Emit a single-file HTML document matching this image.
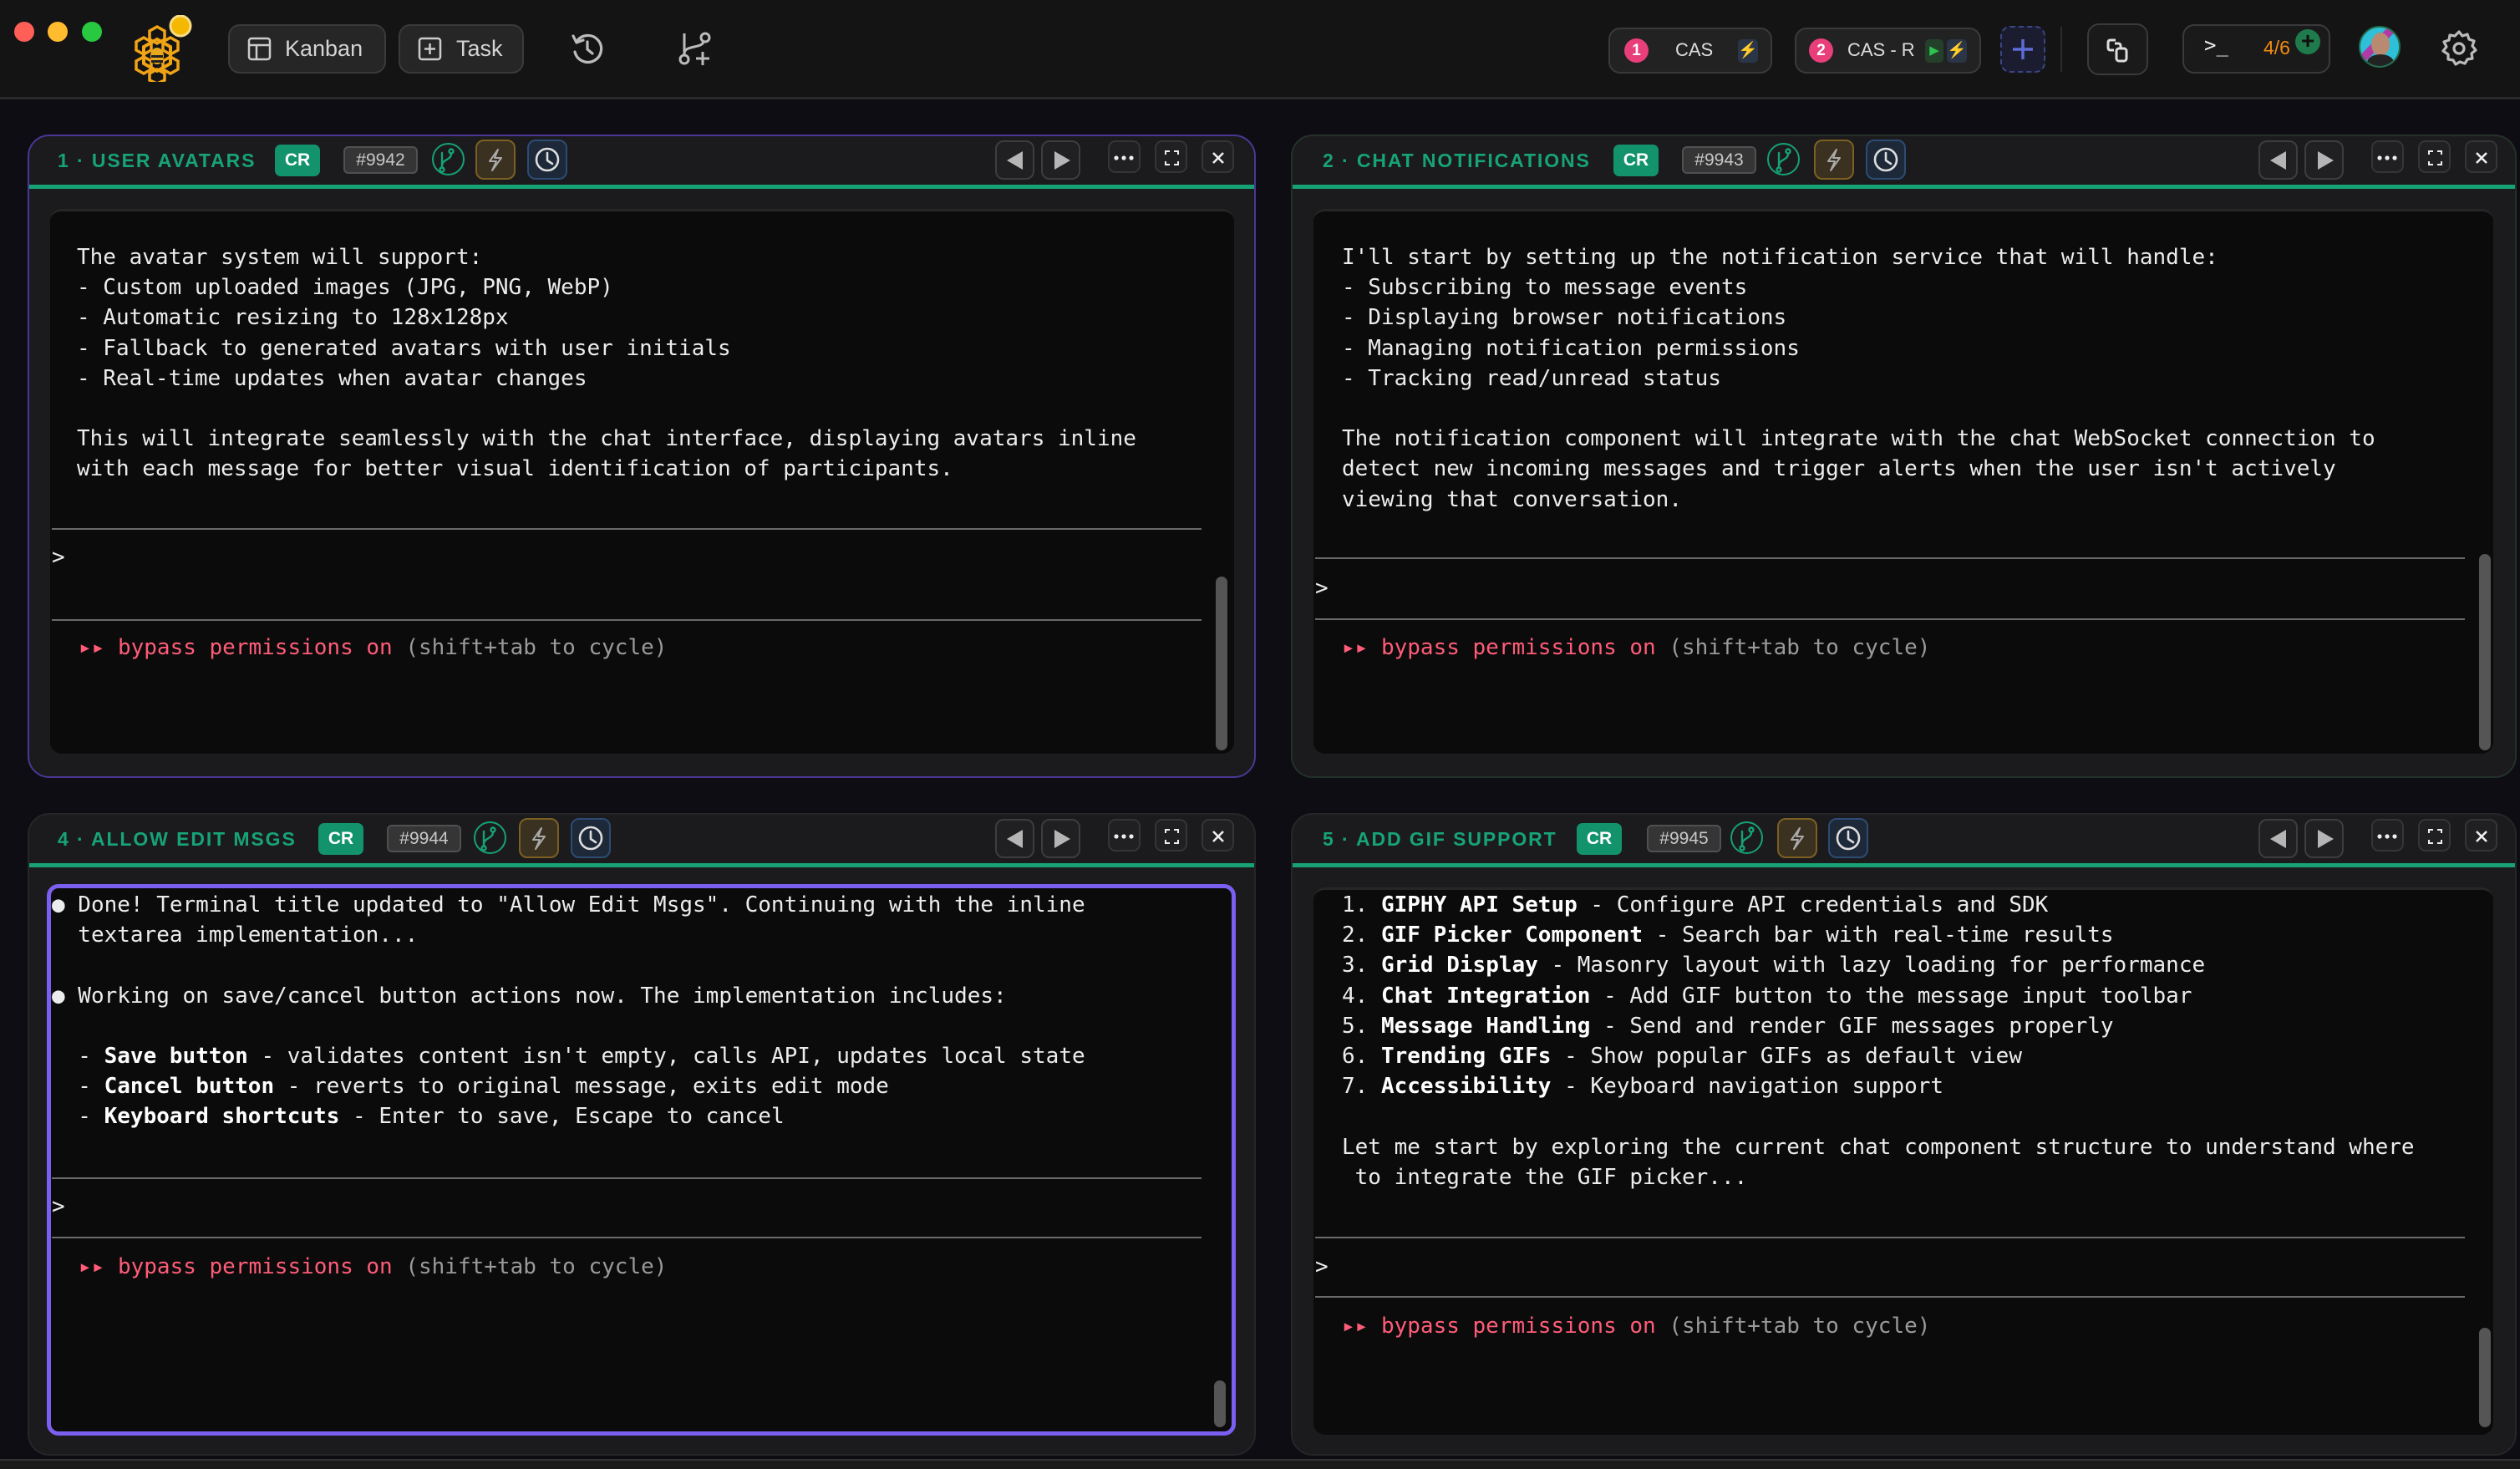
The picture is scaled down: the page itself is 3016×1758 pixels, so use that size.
<!DOCTYPE html>
<html><head><meta charset="utf-8">
<style>
*{box-sizing:border-box;margin:0;padding:0}
body{width:3016px;height:1758px;background:#0e0d13;position:relative;overflow:hidden;font-family:"Liberation Sans",sans-serif}
.abs{position:absolute}
.tb{position:absolute;left:0;top:0;width:3016px;height:119px;background:#141415;border-bottom:3px solid #2a2a2c}
.btn{position:absolute;background:#262627;border:2px solid #3a3a3c;border-radius:14px;color:#d0d0d0}
.panel{position:absolute;background:#1b1b1d;border:2px solid #2b2d2c;border-radius:26px}
.gline{position:absolute;left:0;right:0;height:5px;background:#17a276}
.title{position:absolute;font-weight:bold;font-size:23px;letter-spacing:1.9px;color:#17a377;white-space:nowrap;line-height:24px}
.cr{position:absolute;background:#13936b;color:#fff;font-weight:bold;font-size:21px;text-align:center;border-radius:7px;line-height:38px;width:54px;height:38px}
.tag{position:absolute;background:#353536;border:2px solid #505052;color:#c8c8c8;font-size:21px;text-align:center;border-radius:6px;line-height:29px;width:89px;height:33px}
.ib{position:absolute;width:48px;height:48px;border-radius:10px}
.nb{position:absolute;width:47px;height:47px;border:2px solid #3d3d3f;border-radius:10px;background:#202022}
.sb{position:absolute;width:39px;height:39px;border:2px solid #353537;border-radius:9px;background:#202022}
.term{position:absolute;background:#0b0b0b;border-radius:14px;border-top:3px solid #262626}
.tx{position:absolute;font-family:"DejaVu Sans Mono","Liberation Mono",monospace;font-size:26px;line-height:36.2px;color:#ececec;white-space:pre}
.sep{position:absolute;height:2px;background:#6a6a6a}
.scr{position:absolute;width:14px;background:#555;border-radius:7px}
.pink{color:#ff5c78}.gray{color:#9a9a9a}
b{font-weight:bold;color:#fff}
</style></head><body>

<div class="tb"></div>
<div class="abs" style="left:17px;top:26px;width:24px;height:24px;border-radius:50%;background:#ff5f57"></div>
<div class="abs" style="left:57px;top:26px;width:24px;height:24px;border-radius:50%;background:#febc2e"></div>
<div class="abs" style="left:98px;top:26px;width:24px;height:24px;border-radius:50%;background:#28c840"></div>
<svg class="abs" style="left:150px;top:18px" width="90" height="80" viewBox="150 18 90 80">
 <g fill="none" stroke="#f0a416" stroke-width="3.5">
  <polygon points="188,32 197,37 197,47 188,52 179,47 179,37"/>
  <polygon points="172,45 181,50 181,60 172,65 163,60 163,50"/>
  <polygon points="204,45 213,50 213,60 204,65 195,60 195,50"/>
  <polygon points="172,68 181,73 181,83 172,88 163,83 163,73"/>
  <polygon points="204,68 213,73 213,83 204,88 195,83 195,73"/>
  <polygon points="188,83 197,88 197,96 188,100 179,96 179,88"/>
  <polygon points="188,47 204,56 204,76 188,85 172,76 172,56" stroke-width="4"/>
 </g>
 <ellipse cx="188" cy="67" rx="8" ry="10" fill="#e8a820"/>
 <rect x="181" y="66" width="14" height="3" fill="#222"/><rect x="181" y="72" width="14" height="3" fill="#222"/>
 <circle cx="216" cy="31" r="12" fill="#f5b800" stroke="#f7dc85" stroke-width="3"/>
</svg>
<div class="btn" style="left:273px;top:29px;width:189px;height:59px"></div>
<svg class="abs" style="left:296px;top:44px" width="30" height="30" viewBox="0 0 30 30"><rect x="2" y="2" width="25" height="25" rx="3" fill="none" stroke="#ccc" stroke-width="2.5"/><line x1="2" y1="10" x2="27" y2="10" stroke="#ccc" stroke-width="2.5"/><line x1="11" y1="10" x2="11" y2="27" stroke="#ccc" stroke-width="2.5"/></svg>
<div class="abs" style="left:341px;top:43px;font-size:27px;color:#d4d4d4">Kanban</div>
<div class="btn" style="left:477px;top:29px;width:150px;height:59px"></div>
<svg class="abs" style="left:500px;top:44px" width="30" height="30" viewBox="0 0 30 30"><rect x="2" y="2" width="25" height="25" rx="3" fill="none" stroke="#ccc" stroke-width="2.5"/><line x1="14.5" y1="8" x2="14.5" y2="21" stroke="#ccc" stroke-width="2.5"/><line x1="8" y1="14.5" x2="21" y2="14.5" stroke="#ccc" stroke-width="2.5"/></svg>
<div class="abs" style="left:546px;top:43px;font-size:27px;color:#d4d4d4">Task</div>
<svg class="abs" style="left:682px;top:38px" width="42" height="42" viewBox="0 0 42 42"><path d="M8 12 A16 16 0 1 1 6 24" fill="none" stroke="#bbb" stroke-width="3.2" stroke-linecap="round"/><path d="M4 5 L8 13 L16 10" fill="none" stroke="#bbb" stroke-width="3.2" stroke-linecap="round" stroke-linejoin="round"/><path d="M21 12 V21 L27 26" fill="none" stroke="#bbb" stroke-width="3.2" stroke-linecap="round"/></svg>
<svg class="abs" style="left:810px;top:36px" width="46" height="44" viewBox="0 0 46 44"><circle cx="9" cy="35" r="5" fill="none" stroke="#bbb" stroke-width="3"/><circle cx="34" cy="9" r="5" fill="none" stroke="#bbb" stroke-width="3"/><path d="M9 30 V4 M9 28 C9 18 30 22 32 14" fill="none" stroke="#bbb" stroke-width="3"/><path d="M31 26 V42 M23 34 H39" stroke="#bbb" stroke-width="3"/></svg>

<div class="btn" style="left:1925px;top:33px;width:196px;height:55px;background:#222223"></div>
<div class="abs" style="left:1944px;top:46px;width:29px;height:29px;border-radius:50%;background:#e83e7a;color:#fff;font-size:19px;font-weight:bold;text-align:center;line-height:29px">1</div>
<div class="abs" style="left:2005px;top:47px;font-size:22px;color:#ddd">CAS</div>
<div class="abs" style="left:2080px;top:47px;width:24px;height:28px;border-radius:5px;background:#2b3548;color:#ffc21a;font-size:19px;text-align:center;line-height:28px">⚡</div>
<div class="btn" style="left:2148px;top:33px;width:223px;height:55px;background:#222223"></div>
<div class="abs" style="left:2165px;top:46px;width:29px;height:29px;border-radius:50%;background:#e83e7a;color:#fff;font-size:19px;font-weight:bold;text-align:center;line-height:29px">2</div>
<div class="abs" style="left:2211px;top:47px;font-size:22px;color:#ddd">CAS - R</div>
<div class="abs" style="left:2304px;top:47px;width:22px;height:28px;border-radius:5px;background:#24402b;color:#2ec24f;font-size:15px;text-align:center;line-height:28px">▶</div>
<div class="abs" style="left:2330px;top:47px;width:24px;height:28px;border-radius:5px;background:#2b3548;color:#ffc21a;font-size:19px;text-align:center;line-height:28px">⚡</div>
<div class="abs" style="left:2394px;top:31px;width:54px;height:56px;border:2px dashed #3c4684;border-radius:12px;background:#1b1c30"></div>
<svg class="abs" style="left:2406px;top:44px" width="30" height="30"><path d="M15 3V27M3 15H27" stroke="#5d6cd6" stroke-width="3.5"/></svg>
<div class="abs" style="left:2466px;top:32px;width:2px;height:54px;background:#2c2c2e"></div>
<div class="btn" style="left:2498px;top:28px;width:73px;height:62px;background:#1a1a1b"></div>
<svg class="abs" style="left:2518px;top:42px" width="34" height="34" viewBox="0 0 34 34"><path d="M14 6 H8 Q5 6 5 9 V15 Q5 18 8 18 H12" fill="none" stroke="#ddd" stroke-width="3"/><rect x="15" y="16" width="12" height="15" rx="3" fill="none" stroke="#ddd" stroke-width="3"/><path d="M13 10 H17 Q20 10 20 13 V16" fill="none" stroke="#ddd" stroke-width="3"/></svg>
<div class="btn" style="left:2612px;top:29px;width:177px;height:59px;background:#1a1a1b"></div>
<div class="abs" style="left:2638px;top:40px;font-family:'DejaVu Sans Mono',monospace;font-size:24px;color:#eee">&gt;_</div>
<div class="abs" style="left:2709px;top:44px;font-size:23px;color:#f28a12">4/6</div>
<div class="abs" style="left:2747px;top:35px;width:30px;height:30px;border-radius:50%;background:#1f7a4c;color:#111;font-size:28px;text-align:center;line-height:28px;font-weight:bold">+</div>
<div class="abs" style="left:2823px;top:31px;width:50px;height:50px;border-radius:50%;border:2px solid #236e4c;background:linear-gradient(135deg,#2ec0d8 0 35%,#b03aa6 36% 50%,#2ec0d8 51%);overflow:hidden"><div style="position:absolute;left:13px;top:6px;width:22px;height:28px;border-radius:50%;background:#b88a72"></div><div style="position:absolute;left:8px;top:32px;width:32px;height:20px;border-radius:50% 50% 0 0;background:#222"></div></div>
<svg class="abs" style="left:2920px;top:34px" width="46" height="46" viewBox="0 0 46 46"><path d="M23 4 L27 9 L33 7 L35 13 L41 15 L39 21 L43 26 L38 30 L39 36 L33 37 L30 42 L24 40 L19 43 L16 38 L10 37 L10 31 L4 27 L8 22 L5 16 L11 14 L12 8 L18 9 Z" fill="none" stroke="#bbb" stroke-width="3.2" stroke-linejoin="round"/><circle cx="23" cy="24" r="6" fill="none" stroke="#bbb" stroke-width="3.2"/></svg>

<div class="panel" style="left:33px;top:161px;width:1470px;height:770px;border-color:#4b3793">
 <div class="gline" style="top:58px"></div>
 <div class="title" style="left:34px;top:17px">1 · USER AVATARS</div>
 <div class="cr" style="left:294px;top:10px">CR</div>
 <div class="tag" style="left:376px;top:12px">#9942</div>
 <div class="ib" style="left:482px;top:8px;width:39px;height:39px;border:2px solid #16a174;border-radius:50%"></div>
 <div class="ib" style="left:534px;top:4px;border:2px solid #7c5f22;background:#3a3120"></div>
 <div class="ib" style="left:596px;top:4px;border:2px solid #2c4c74;background:#1d2838"></div>
 <div class="nb" style="left:1156px;top:5px"></div><div class="nb" style="left:1211px;top:5px"></div>
 <div class="sb" style="left:1291px;top:5px"></div><div class="sb" style="left:1347px;top:5px"></div><div class="sb" style="left:1403px;top:5px"></div>
</div>
<div class="panel" style="left:1545px;top:161px;width:1467px;height:770px;border-color:#243129">
 <div class="gline" style="top:58px"></div>
 <div class="title" style="left:36px;top:17px">2 · CHAT NOTIFICATIONS</div>
 <div class="cr" style="left:384px;top:10px">CR</div>
 <div class="tag" style="left:466px;top:12px">#9943</div>
 <div class="ib" style="left:568px;top:8px;width:39px;height:39px;border:2px solid #16a174;border-radius:50%"></div>
 <div class="ib" style="left:624px;top:4px;border:2px solid #7c5f22;background:#3a3120"></div>
 <div class="ib" style="left:686px;top:4px;border:2px solid #2c4c74;background:#1d2838"></div>
 <div class="nb" style="left:1156px;top:5px"></div><div class="nb" style="left:1211px;top:5px"></div>
 <div class="sb" style="left:1291px;top:5px"></div><div class="sb" style="left:1347px;top:5px"></div><div class="sb" style="left:1403px;top:5px"></div>
</div>
<div class="panel" style="left:33px;top:973px;width:1470px;height:769px;border-color:#262628">
 <div class="gline" style="top:58px"></div>
 <div class="title" style="left:34px;top:17px">4 · ALLOW EDIT MSGS</div>
 <div class="cr" style="left:346px;top:10px">CR</div>
 <div class="tag" style="left:428px;top:12px">#9944</div>
 <div class="ib" style="left:532px;top:8px;width:39px;height:39px;border:2px solid #16a174;border-radius:50%"></div>
 <div class="ib" style="left:586px;top:4px;border:2px solid #7c5f22;background:#3a3120"></div>
 <div class="ib" style="left:648px;top:4px;border:2px solid #2c4c74;background:#1d2838"></div>
 <div class="nb" style="left:1156px;top:5px"></div><div class="nb" style="left:1211px;top:5px"></div>
 <div class="sb" style="left:1291px;top:5px"></div><div class="sb" style="left:1347px;top:5px"></div><div class="sb" style="left:1403px;top:5px"></div>
</div>
<div class="panel" style="left:1545px;top:973px;width:1467px;height:769px;border-color:#262628">
 <div class="gline" style="top:58px"></div>
 <div class="title" style="left:36px;top:17px">5 · ADD GIF SUPPORT</div>
 <div class="cr" style="left:340px;top:10px">CR</div>
 <div class="tag" style="left:424px;top:12px">#9945</div>
 <div class="ib" style="left:524px;top:8px;width:39px;height:39px;border:2px solid #16a174;border-radius:50%"></div>
 <div class="ib" style="left:580px;top:4px;border:2px solid #7c5f22;background:#3a3120"></div>
 <div class="ib" style="left:641px;top:4px;border:2px solid #2c4c74;background:#1d2838"></div>
 <div class="nb" style="left:1156px;top:5px"></div><div class="nb" style="left:1211px;top:5px"></div>
 <div class="sb" style="left:1291px;top:5px"></div><div class="sb" style="left:1347px;top:5px"></div><div class="sb" style="left:1403px;top:5px"></div>
</div>

<svg class="abs" style="left:0;top:0" width="3016" height="1758" pointer-events="none">
 <g fill="none" stroke-linecap="round" stroke-linejoin="round">
 <g stroke="#16a174" stroke-width="2.4">
  <path d="M529 183 V201 M529 199 C529 190 540 192 540 184"/><circle cx="540" cy="181" r="2.5"/><circle cx="529" cy="203" r="2.5"/>
  <path d="M2129 183 V201 M2129 199 C2129 190 2140 192 2140 184"/><circle cx="2140" cy="181" r="2.5"/><circle cx="2129" cy="203" r="2.5"/>
  <path d="M579 995 V1013 M579 1011 C579 1002 590 1004 590 996"/><circle cx="590" cy="993" r="2.5"/><circle cx="579" cy="1015" r="2.5"/>
  <path d="M2085 995 V1013 M2085 1011 C2085 1002 2096 1004 2096 996"/><circle cx="2096" cy="993" r="2.5"/><circle cx="2085" cy="1015" r="2.5"/>
 </g>
 <g stroke="#aaa" stroke-width="2">
  <path d="M596 179 L586 193 H594 L589 204 L600 189 H592 Z"/>
  <path d="M2198 179 L2188 193 H2196 L2191 204 L2202 189 H2194 Z"/>
  <path d="M648 991 L638 1005 H646 L641 1016 L652 1001 H644 Z"/>
  <path d="M2154 991 L2144 1005 H2152 L2147 1016 L2158 1001 H2150 Z"/>
 </g>
 <g stroke="#ddd" stroke-width="2.6">
  <circle cx="655" cy="191" r="13"/><path d="M655 183 V192 L661 196"/>
  <circle cx="2257" cy="191" r="13"/><path d="M2257 183 V192 L2263 196"/>
  <circle cx="707" cy="1003" r="13"/><path d="M707 995 V1004 L713 1008"/>
  <circle cx="2212" cy="1003" r="13"/><path d="M2212 995 V1004 L2218 1008"/>
 </g>
 </g>
 <g fill="#b5b5b5">
  <path d="M1205 192 L1224 181 V203 Z"/><path d="M1281 192 L1262 181 V203 Z"/>
  <path d="M2717 192 L2736 181 V203 Z"/><path d="M2793 192 L2774 181 V203 Z"/>
  <path d="M1205 1004 L1224 993 V1015 Z"/><path d="M1281 1004 L1262 993 V1015 Z"/>
  <path d="M2717 1004 L2736 993 V1015 Z"/><path d="M2793 1004 L2774 993 V1015 Z"/>
 </g>
 <g fill="#eee">
  <circle cx="1336" cy="189" r="2.6"/><circle cx="1345" cy="189" r="2.6"/><circle cx="1354" cy="189" r="2.6"/>
  <circle cx="2848" cy="189" r="2.6"/><circle cx="2857" cy="189" r="2.6"/><circle cx="2866" cy="189" r="2.6"/>
  <circle cx="1336" cy="1001" r="2.6"/><circle cx="1345" cy="1001" r="2.6"/><circle cx="1354" cy="1001" r="2.6"/>
  <circle cx="2848" cy="1001" r="2.6"/><circle cx="2857" cy="1001" r="2.6"/><circle cx="2866" cy="1001" r="2.6"/>
 </g>
 <g fill="none" stroke="#eee" stroke-width="2">
  <path d="M1395 185 V181 H1400 M1405 181 H1410 V185 M1410 193 V197 H1405 M1400 197 H1395 V193"/>
  <path d="M2907 185 V181 H2912 M2917 181 H2922 V185 M2922 193 V197 H2917 M2912 197 H2907 V193"/>
  <path d="M1395 997 V993 H1400 M1405 993 H1410 V997 M1410 1005 V1009 H1405 M1400 1009 H1395 V1005"/>
  <path d="M2907 997 V993 H2912 M2917 993 H2922 V997 M2922 1005 V1009 H2917 M2912 1009 H2907 V1005"/>
  <g stroke-width="2.6"><path d="M1452 183 L1464 195 M1464 183 L1452 195"/><path d="M2964 183 L2976 195 M2976 183 L2964 195"/><path d="M1452 995 L1464 1007 M1464 995 L1452 1007"/><path d="M2964 995 L2976 1007 M2976 995 L2964 1007"/></g>
 </g>
</svg>

<div class="term" style="left:60px;top:250px;width:1417px;height:652px"></div>
<div class="tx" style="left:92px;top:290px">The avatar system will support:
- Custom uploaded images (JPG, PNG, WebP)
- Automatic resizing to 128x128px
- Fallback to generated avatars with user initials
- Real-time updates when avatar changes

This will integrate seamlessly with the chat interface, displaying avatars inline
with each message for better visual identification of participants.</div>
<div class="sep" style="left:62px;width:1376px;top:632px"></div>
<div class="tx" style="left:62px;top:649px">&gt;</div>
<div class="sep" style="left:62px;width:1376px;top:741px"></div>
<div class="tx" style="left:94px;top:757px"><span class="pink">▸▸ bypass permissions on</span> <span class="gray">(shift+tab to cycle)</span></div>
<div class="scr" style="left:1455px;top:690px;height:208px"></div>

<div class="term" style="left:1572px;top:250px;width:1412px;height:652px"></div>
<div class="tx" style="left:1606px;top:290px">I'll start by setting up the notification service that will handle:
- Subscribing to message events
- Displaying browser notifications
- Managing notification permissions
- Tracking read/unread status

The notification component will integrate with the chat WebSocket connection to
detect new incoming messages and trigger alerts when the user isn't actively
viewing that conversation.</div>
<div class="sep" style="left:1574px;width:1376px;top:667px"></div>
<div class="tx" style="left:1574px;top:686px">&gt;</div>
<div class="sep" style="left:1574px;width:1376px;top:740px"></div>
<div class="tx" style="left:1606px;top:757px"><span class="pink">▸▸ bypass permissions on</span> <span class="gray">(shift+tab to cycle)</span></div>
<div class="scr" style="left:2967px;top:663px;height:235px"></div>

<div class="term" style="left:56px;top:1058px;width:1423px;height:660px;border:5px solid #7b5ff0;background:#0b0b0b"></div>
<div class="tx" style="left:62px;top:1065px">● Done! Terminal title updated to "Allow Edit Msgs". Continuing with the inline
  textarea implementation...

● Working on save/cancel button actions now. The implementation includes:

  - <b>Save button</b> - validates content isn't empty, calls API, updates local state
  - <b>Cancel button</b> - reverts to original message, exits edit mode
  - <b>Keyboard shortcuts</b> - Enter to save, Escape to cancel</div>
<div class="sep" style="left:62px;width:1376px;top:1409px"></div>
<div class="tx" style="left:62px;top:1426px">&gt;</div>
<div class="sep" style="left:62px;width:1376px;top:1480px"></div>
<div class="tx" style="left:94px;top:1498px"><span class="pink">▸▸ bypass permissions on</span> <span class="gray">(shift+tab to cycle)</span></div>
<div class="scr" style="left:1453px;top:1652px;height:56px"></div>

<div class="term" style="left:1572px;top:1062px;width:1412px;height:655px"></div>
<div class="tx" style="left:1606px;top:1065px">1. <b>GIPHY API Setup</b> - Configure API credentials and SDK
2. <b>GIF Picker Component</b> - Search bar with real-time results
3. <b>Grid Display</b> - Masonry layout with lazy loading for performance
4. <b>Chat Integration</b> - Add GIF button to the message input toolbar
5. <b>Message Handling</b> - Send and render GIF messages properly
6. <b>Trending GIFs</b> - Show popular GIFs as default view
7. <b>Accessibility</b> - Keyboard navigation support

Let me start by exploring the current chat component structure to understand where
 to integrate the GIF picker...</div>
<div class="sep" style="left:1574px;width:1376px;top:1480px"></div>
<div class="tx" style="left:1574px;top:1498px">&gt;</div>
<div class="sep" style="left:1574px;width:1376px;top:1551px"></div>
<div class="tx" style="left:1606px;top:1569px"><span class="pink">▸▸ bypass permissions on</span> <span class="gray">(shift+tab to cycle)</span></div>
<div class="scr" style="left:2967px;top:1589px;height:119px"></div>

<div class="abs" style="left:0;top:1746px;width:3016px;height:12px;background:#1a1a1b;border-top:2px solid #333"></div>
</body></html>
